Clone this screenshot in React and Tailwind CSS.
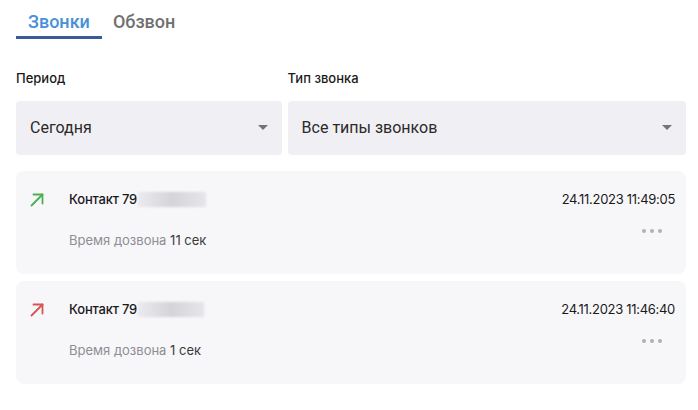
import React from 'react';

const calls = [
  { color: 'text-[#4caf50]', date: '24.11.2023 11:49:05', wait: '11 сек', blur: 'w-[68px]' },
  { color: 'text-[#d9534f]', date: '24.11.2023 11:46:40', wait: '1 сек', blur: 'w-[66px]' },
];

function Arrow({ className }) {
  return (
    <svg viewBox="0 0 14 14" className={`h-[14px] w-[14px] ${className}`} fill="none" stroke="currentColor" strokeWidth="1.8" strokeLinecap="round" strokeLinejoin="round">
      <path d="M1.5 12.5 12.5 1.5" />
      <path d="M3.5 1.5h9v9" />
    </svg>
  );
}

function Select({ value }) {
  return (
    <div className="flex h-[54px] items-center justify-between rounded bg-[#f0f0f4] pl-[14px] pr-[14px]">
      <span className="font-['Roboto',sans-serif] text-[16px] text-[#2a2a2a]">{value}</span>
      <span className="h-0 w-0 border-x-[5px] border-t-[5px] border-x-transparent border-t-[#757575]" />
    </div>
  );
}

function CallCard({ call }) {
  return (
    <div className="flex h-[103px] rounded-lg bg-[#f7f7fa] pl-[14px] pr-[11px] pt-[20px]">
      <div className="w-[39px] pt-[2px]">
        <Arrow className={call.color} />
      </div>
      <div className="flex flex-1 flex-col">
        <div className="flex h-[18px] items-center">
          <span className="text-[13px] font-medium tracking-[-0.2px] text-[#1a1a1a]">Контакт 79</span>
          <span className={`ml-[1px] h-[15px] ${call.blur} bg-gradient-to-r from-[#ebebef] via-[#d4d4d9] to-[#e6e6ea] blur-[1px]`} />
        </div>
        <div className="mt-[22px] text-[13px] text-[#8e8e93]">
          Время дозвона <span className="text-[#3a3a3a]">{call.wait}</span>
        </div>
      </div>
      <div className="flex flex-col items-end">
        <div className="flex h-[18px] items-center text-[13px] tracking-[-0.3px] text-[#1a1a1a]">{call.date}</div>
        <div className="mr-[13px] mt-[20px] flex gap-[4px]">
          <span className="h-[4px] w-[4px] rounded-full bg-[#b0b0b8]" />
          <span className="h-[4px] w-[4px] rounded-full bg-[#b0b0b8]" />
          <span className="h-[4px] w-[4px] rounded-full bg-[#b0b0b8]" />
        </div>
      </div>
    </div>
  );
}

export default function App() {
  return (
    <div className="min-h-[410px] bg-white pl-4 pr-3 font-['Inter',sans-serif]">
      <div className="flex h-[39px] font-['Roboto',sans-serif] text-[18px] font-medium">
        <div className="border-b-[3px] border-[#3b5a9a] px-3 pt-[8px] text-[#4a8fd8]">Звонки</div>
        <div className="px-[11px] pt-[8px] text-[#707070]">Обзвон</div>
      </div>
      <div className="mt-[30px] grid grid-cols-[2fr_3fr] gap-[6px]">
        <div>
          <div className="mb-[12px] text-[13px] font-medium text-[#1a1a1a]">Период</div>
          <Select value="Сегодня" />
        </div>
        <div>
          <div className="mb-[12px] text-[13px] font-medium text-[#1a1a1a]">Тип звонка</div>
          <Select value="Все типы звонков" />
        </div>
      </div>
      <div className="mt-[16px] flex flex-col gap-[7px]">
        {calls.map((call) => (
          <CallCard key={call.date} call={call} />
        ))}
      </div>
    </div>
  );
}
